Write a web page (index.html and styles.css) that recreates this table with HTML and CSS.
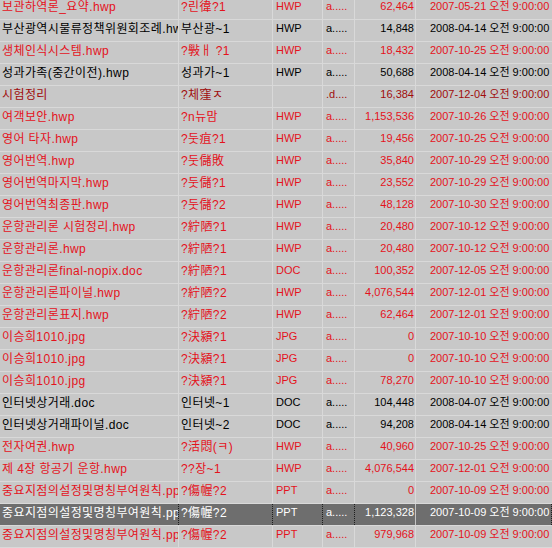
FILE: index.html
```html
<!DOCTYPE html>
<html lang="ko">
<head>
<meta charset="utf-8">
<title>파일 목록</title>
<link rel="stylesheet" href="styles.css">
</head>
<body>
<div class="list">
  <div class="row red"><div class="c name">보관하역론_요약.hwp</div><div class="c short">?린徫?1</div><div class="c type">HWP</div><div class="c attr">a.....</div><div class="c size">62,464</div><div class="c date">2007-05-21 오전 9:00:00</div></div>
  <div class="row"><div class="c name">부산광역시물류정책위원회조례.hwp</div><div class="c short">부산광~1</div><div class="c type">HWP</div><div class="c attr">a.....</div><div class="c size">14,848</div><div class="c date">2008-04-14 오전 9:00:00</div></div>
  <div class="row red"><div class="c name">생체인식시스템.hwp</div><div class="c short">?斅ㅐ ?1</div><div class="c type">HWP</div><div class="c attr">a.....</div><div class="c size">18,432</div><div class="c date">2007-10-25 오전 9:00:00</div></div>
  <div class="row"><div class="c name">성과가족(중간이전).hwp</div><div class="c short">성과가~1</div><div class="c type">HWP</div><div class="c attr">a.....</div><div class="c size">50,688</div><div class="c date">2008-04-14 오전 9:00:00</div></div>
  <div class="row dark"><div class="c name">시험정리</div><div class="c short">?체窪ㅈ</div><div class="c type"></div><div class="c attr">.d....</div><div class="c size">16,384</div><div class="c date">2007-12-04 오전 9:00:00</div></div>
  <div class="row red"><div class="c name">여객보안.hwp</div><div class="c short">?n뉴맘</div><div class="c type">HWP</div><div class="c attr">a.....</div><div class="c size">1,153,536</div><div class="c date">2007-10-26 오전 9:00:00</div></div>
  <div class="row red"><div class="c name">영어 타자.hwp</div><div class="c short">?둣疽?1</div><div class="c type">HWP</div><div class="c attr">a.....</div><div class="c size">19,456</div><div class="c date">2007-10-25 오전 9:00:00</div></div>
  <div class="row red"><div class="c name">영어번역.hwp</div><div class="c short">?둣儲敗</div><div class="c type">HWP</div><div class="c attr">a.....</div><div class="c size">35,840</div><div class="c date">2007-10-29 오전 9:00:00</div></div>
  <div class="row red"><div class="c name">영어번역마지막.hwp</div><div class="c short">?둣儲?1</div><div class="c type">HWP</div><div class="c attr">a.....</div><div class="c size">23,552</div><div class="c date">2007-10-29 오전 9:00:00</div></div>
  <div class="row red"><div class="c name">영어번역최종판.hwp</div><div class="c short">?둣儲?2</div><div class="c type">HWP</div><div class="c attr">a.....</div><div class="c size">48,128</div><div class="c date">2007-10-30 오전 9:00:00</div></div>
  <div class="row red"><div class="c name">운항관리론 시험정리.hwp</div><div class="c short">?紵陋?1</div><div class="c type">HWP</div><div class="c attr">a.....</div><div class="c size">20,480</div><div class="c date">2007-10-12 오전 9:00:00</div></div>
  <div class="row red"><div class="c name">운항관리론.hwp</div><div class="c short">?紵陋?1</div><div class="c type">HWP</div><div class="c attr">a.....</div><div class="c size">20,480</div><div class="c date">2007-10-12 오전 9:00:00</div></div>
  <div class="row red"><div class="c name">운항관리론final-nopix.doc</div><div class="c short">?紵陋?1</div><div class="c type">DOC</div><div class="c attr">a.....</div><div class="c size">100,352</div><div class="c date">2007-12-05 오전 9:00:00</div></div>
  <div class="row red"><div class="c name">운항관리론파이널.hwp</div><div class="c short">?紵陋?2</div><div class="c type">HWP</div><div class="c attr">a.....</div><div class="c size">4,076,544</div><div class="c date">2007-12-01 오전 9:00:00</div></div>
  <div class="row red"><div class="c name">운항관리론표지.hwp</div><div class="c short">?紵陋?2</div><div class="c type">HWP</div><div class="c attr">a.....</div><div class="c size">62,464</div><div class="c date">2007-12-01 오전 9:00:00</div></div>
  <div class="row red"><div class="c name">이승희1010.jpg</div><div class="c short">?決潁?1</div><div class="c type">JPG</div><div class="c attr">a.....</div><div class="c size">0</div><div class="c date">2007-10-10 오전 9:00:00</div></div>
  <div class="row red"><div class="c name">이승희1010.jpg</div><div class="c short">?決潁?1</div><div class="c type">JPG</div><div class="c attr">a.....</div><div class="c size">0</div><div class="c date">2007-10-10 오전 9:00:00</div></div>
  <div class="row red"><div class="c name">이승희1010.jpg</div><div class="c short">?決潁?1</div><div class="c type">JPG</div><div class="c attr">a.....</div><div class="c size">78,270</div><div class="c date">2007-10-10 오전 9:00:00</div></div>
  <div class="row"><div class="c name">인터넷상거래.doc</div><div class="c short">인터넷~1</div><div class="c type">DOC</div><div class="c attr">a.....</div><div class="c size">104,448</div><div class="c date">2008-04-07 오전 9:00:00</div></div>
  <div class="row"><div class="c name">인터넷상거래파이널.doc</div><div class="c short">인터넷~2</div><div class="c type">DOC</div><div class="c attr">a.....</div><div class="c size">94,208</div><div class="c date">2008-04-14 오전 9:00:00</div></div>
  <div class="row red"><div class="c name">전자여권.hwp</div><div class="c short">?活悶(ㅋ)</div><div class="c type">HWP</div><div class="c attr">a.....</div><div class="c size">40,960</div><div class="c date">2007-10-25 오전 9:00:00</div></div>
  <div class="row red"><div class="c name">제 4장 항공기 운항.hwp</div><div class="c short">??장~1</div><div class="c type">HWP</div><div class="c attr">a.....</div><div class="c size">4,076,544</div><div class="c date">2007-12-01 오전 9:00:00</div></div>
  <div class="row red"><div class="c name">중요지점의설정및명칭부여원칙.ppt</div><div class="c short">?傷幄?2</div><div class="c type">PPT</div><div class="c attr">a.....</div><div class="c size">0</div><div class="c date">2007-10-09 오전 9:00:00</div></div>
  <div class="row selected"><div class="c name">중요지점의설정및명칭부여원칙.ppt</div><div class="c short">?傷幄?2</div><div class="c type">PPT</div><div class="c attr">a.....</div><div class="c size">1,123,328</div><div class="c date">2007-10-09 오전 9:00:00</div></div>
  <div class="row red"><div class="c name">중요지점의설정및명칭부여원칙.ppt</div><div class="c short">?傷幄?2</div><div class="c type">PPT</div><div class="c attr">a.....</div><div class="c size">979,968</div><div class="c date">2007-10-09 오전 9:00:00</div></div>
</div>
</body>
</html>
```

FILE: styles.css
```css
html, body {
  margin: 0;
  padding: 0;
  background: #c8c8c8;
  overflow: hidden;
}

.list {
  margin-top: -2px;
  font-family: "Liberation Sans", "Noto Sans CJK KR", sans-serif;
  font-size: 11px;
  color: #000;
}

.row {
  display: grid;
  grid-template-columns: 179px 94px 50px 32px 61px 1fr;
  height: 22px;
  box-sizing: border-box;
  border-bottom: 1px solid #d9d9d9;
}

.c {
  box-sizing: border-box;
  border-right: 1px solid #d9d9d9;
  padding-top: 1px;
  line-height: 14px;
  white-space: nowrap;
  overflow: hidden;
}

.name, .short {
  font-size: 12px;
  letter-spacing: 0.4px;
  padding-top: 2px;
  padding-left: 2px;
}

.type, .attr {
  padding-left: 3px;
}

.size {
  text-align: right;
  padding-right: 1px;
}

.date {
  padding-left: 14px;
  border-right: none;
}

.red { color: #e4121c; }
.dark { color: #a00c0c; }

.selected {
  background: #6e6e6e;
  color: #fff;
}

.selected .c {
  border-right: 1px dotted #1e1e1e;
}

.selected .size {
  border-right: 1px solid #c4c4c4;
}
```
